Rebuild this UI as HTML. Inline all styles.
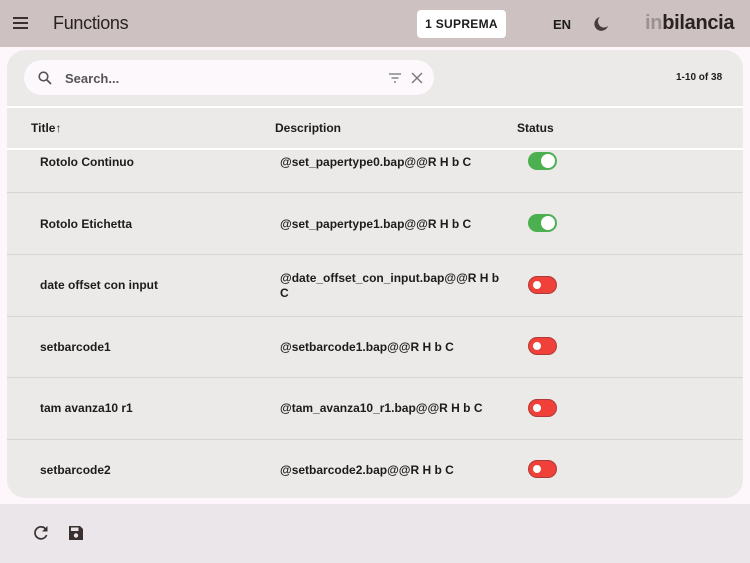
<!DOCTYPE html><html><head><style>
*{margin:0;padding:0;box-sizing:border-box}
body{width:750px;height:563px;background:#fdf7fb;font-family:"Liberation Sans",sans-serif;position:relative;overflow:hidden;color:#1d1b1b}
.hdr{position:absolute;left:0;top:0;width:750px;height:47px;background:#cdc1c1}
.a{position:absolute}
.b{font-weight:bold;font-size:12px}
.card{position:absolute;left:7px;top:50px;width:736px;height:448px;background:#eceae8;border-radius:18px;overflow:hidden}
.line{position:absolute;left:0;width:736px;height:1px;background:#d8d4d4}
.tog{position:absolute;left:521px;width:29px;height:18px;border-radius:9px}
.on{background:#4caf50}.on:after{content:"";position:absolute;right:2px;top:2px;width:14px;height:14px;border-radius:50%;background:#fff}
.off{background:#f0403a;border:1px solid #b03a36}.off:after{content:"";position:absolute;left:4px;top:4px;width:8px;height:8px;border-radius:50%;background:#fff}
.foot{position:absolute;left:0;top:504px;width:750px;height:59px;background:#ebe6e9}
</style></head><body>
<div class="hdr">
<svg class="a" style="left:12px;top:16px" width="18" height="14"><path d="M1 2h15M1 7h15M1 12h15" stroke="#3a3030" stroke-width="2"/></svg>
<div class="a" style="left:53px;top:13px;font-size:18px;color:#2a2222;letter-spacing:-0.3px">Functions</div>
<div class="a" style="left:417px;top:10px;width:89px;height:28px;background:#fff;border-radius:4px;font-weight:bold;font-size:12px;text-align:center;line-height:28px;letter-spacing:.3px">1 SUPREMA</div>
<div class="a b" style="left:553px;top:17px;font-size:13px">EN</div>
<svg class="a" style="left:594px;top:16px" width="15" height="15"><path d="M6 1A7 7 0 1 0 14 10A6 6 0 0 1 6 1Z" fill="#4a3c3c"/></svg>
<div class="a" style="left:645px;top:12px;font-size:20px;font-weight:bold;color:#2a2222;letter-spacing:-0.3px"><span style="color:#9c9292">in</span>bilancia</div>
</div>
<div class="card">
<div class="a" style="left:17px;top:10px;width:410px;height:35px;background:#fdf8fb;border-radius:18px"></div>
<svg class="a" style="left:31px;top:21px" width="14" height="14"><circle cx="5.5" cy="5.5" r="4.3" fill="none" stroke="#555" stroke-width="1.6"/><path d="M9 9l4 4" stroke="#555" stroke-width="1.8"/></svg>
<div class="a b" style="left:58px;top:21px;font-size:13px;color:#555">Search...</div>
<svg class="a" style="left:381px;top:22px" width="14" height="12"><path d="M1 2h12M3.5 6h7M6 10h2" stroke="#888" stroke-width="1.4"/></svg>
<svg class="a" style="left:404px;top:22px" width="12" height="12"><path d="M1 1l10 10M11 1L1 11" stroke="#777" stroke-width="1.4"/></svg>
<div class="a b" style="left:669px;top:22px;font-size:10px">1-10 of 38</div>
<div class="line" style="top:56px;height:2px;background:#fff"></div>
<div class="a b" style="left:24px;top:71px">Title<span style="font-weight:normal">↑</span></div>
<div class="a b" style="left:268px;top:71px">Description</div>
<div class="a b" style="left:510px;top:71px">Status</div>
<div class="line" style="top:98px;height:2px;background:#fff"></div>
<div class="a b" style="left:33px;top:105px">Rotolo Continuo</div><div class="a b" style="left:273px;top:105px">@set_papertype0.bap@@R H b C</div><div class="tog on" style="top:102px"></div>
<div class="line" style="top:142px"></div>
<div class="a b" style="left:33px;top:167px">Rotolo Etichetta</div><div class="a b" style="left:273px;top:167px">@set_papertype1.bap@@R H b C</div><div class="tog on" style="top:164px"></div>
<div class="line" style="top:204px"></div>
<div class="a b" style="left:33px;top:228px">date offset con input</div><div class="a b" style="left:273px;top:221px;width:220px;line-height:15px">@date_offset_con_input.bap@@R H b C</div><div class="tog off" style="top:226px"></div>
<div class="line" style="top:266px"></div>
<div class="a b" style="left:33px;top:290px">setbarcode1</div><div class="a b" style="left:273px;top:290px">@setbarcode1.bap@@R H b C</div><div class="tog off" style="top:287px"></div>
<div class="line" style="top:327px"></div>
<div class="a b" style="left:33px;top:351px">tam avanza10 r1</div><div class="a b" style="left:273px;top:351px">@tam_avanza10_r1.bap@@R H b C</div><div class="tog off" style="top:349px"></div>
<div class="line" style="top:389px"></div>
<div class="a b" style="left:33px;top:413px">setbarcode2</div><div class="a b" style="left:273px;top:413px">@setbarcode2.bap@@R H b C</div><div class="tog off" style="top:410px"></div>
</div>
<div class="foot">
<svg class="a" style="left:33px;top:21px" width="16" height="16"><path d="M13 4.5A6 6 0 1 0 13.6 10" fill="none" stroke="#3a3030" stroke-width="1.7"/><path d="M14.5 1v5.5H9z" fill="#3a3030"/></svg>
<svg class="a" style="left:68px;top:21px" width="16" height="16"><path d="M1 1h11l3 3v11H1z" fill="#3a3030"/><rect x="3" y="2.5" width="7.5" height="3.5" fill="#ebe6e9"/><circle cx="8" cy="10.5" r="2.2" fill="#ebe6e9"/></svg>
</div>
</body></html>
